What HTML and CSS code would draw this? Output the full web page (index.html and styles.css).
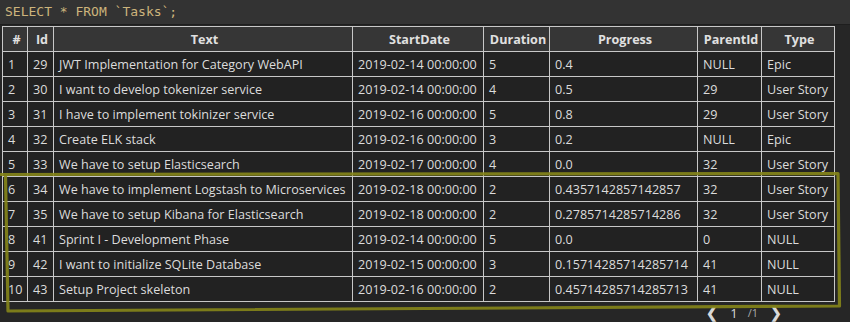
FILE: index.html
```html
<!DOCTYPE html>
<html lang="en">
<head>
    <meta charset="UTF-8">
    <title>Tasks</title>
    <link rel="stylesheet" href="styles.css">
</head>
<body>

    <div class="query-bar">SELECT * FROM `Tasks`;</div>

    <div class="result">
        <table class="grid">
            <colgroup>
                <col class="c-num">
                <col class="c-id">
                <col class="c-text">
                <col class="c-date">
                <col class="c-dur">
                <col class="c-prog">
                <col class="c-parent">
                <col class="c-type">
            </colgroup>
            <thead>
                <tr>
                    <th>#</th><th>Id</th><th>Text</th><th>StartDate</th><th>Duration</th><th>Progress</th><th>ParentId</th><th>Type</th>
                </tr>
            </thead>
            <tbody>
                <tr><td>1</td><td>29</td><td>JWT Implementation for Category WebAPI</td><td>2019-02-14 00:00:00</td><td>5</td><td>0.4</td><td>NULL</td><td>Epic</td></tr>
                <tr><td>2</td><td>30</td><td>I want to develop tokenizer service</td><td>2019-02-14 00:00:00</td><td>4</td><td>0.5</td><td>29</td><td>User Story</td></tr>
                <tr><td>3</td><td>31</td><td>I have to implement tokinizer service</td><td>2019-02-16 00:00:00</td><td>5</td><td>0.8</td><td>29</td><td>User Story</td></tr>
                <tr><td>4</td><td>32</td><td>Create ELK stack</td><td>2019-02-16 00:00:00</td><td>3</td><td>0.2</td><td>NULL</td><td>Epic</td></tr>
                <tr><td>5</td><td>33</td><td>We have to setup Elasticsearch</td><td>2019-02-17 00:00:00</td><td>4</td><td>0.0</td><td>32</td><td>User Story</td></tr>
                <tr><td>6</td><td>34</td><td>We have to implement Logstash to Microservices</td><td>2019-02-18 00:00:00</td><td>2</td><td>0.4357142857142857</td><td>32</td><td>User Story</td></tr>
                <tr><td>7</td><td>35</td><td>We have to setup Kibana for Elasticsearch</td><td>2019-02-18 00:00:00</td><td>2</td><td>0.2785714285714286</td><td>32</td><td>User Story</td></tr>
                <tr><td>8</td><td>41</td><td>Sprint I - Development Phase</td><td>2019-02-14 00:00:00</td><td>5</td><td>0.0</td><td>0</td><td>NULL</td></tr>
                <tr><td>9</td><td>42</td><td>I want to initialize SQLite Database</td><td>2019-02-15 00:00:00</td><td>3</td><td>0.15714285714285714</td><td>41</td><td>NULL</td></tr>
                <tr><td>10</td><td>43</td><td>Setup Project skeleton</td><td>2019-02-16 00:00:00</td><td>2</td><td>0.45714285714285713</td><td>41</td><td>NULL</td></tr>
            </tbody>
        </table>

        <div class="pager">
            <span class="arrow">&#10094;</span>
            <span class="page">1</span>
            <span class="total">/1</span>
            <span class="arrow">&#10095;</span>
        </div>

        <!-- hand drawn highlight round rows 6-10 -->
        <svg class="mark" width="850" height="322" viewBox="0 0 850 322">
            <path d="M0 174.5 L838 173.5 L839.5 306 L8 311 L5.5 176" fill="none" stroke="#86861a" stroke-width="3.2" stroke-opacity="0.9" stroke-linejoin="round"/>
        </svg>
    </div>

</body>
</html>
```

FILE: styles.css
```css
/* General */
body {
    margin: 0;
    background: #262626;
    color: #dcdcdc;
    font-family: 'Open Sans', 'Noto Sans', sans-serif;
    width: 850px;
    height: 322px;
    overflow: hidden;
}

/* Query line */
.query-bar {
    height: 25px;
    line-height: 23px;
    padding-left: 5px;
    background: #333333;
    border-bottom: 1px solid #1e1e1e;
    box-sizing: border-box;
    font-family: 'DejaVu Sans Mono', 'Liberation Mono', monospace;
    font-size: 13px;
    color: #cdb47c;
}

.result {
    padding: 1px 0 0 2px;
}

/* Table */
.grid {
    border-collapse: collapse;
    table-layout: fixed;
    width: 833px;
    font-size: 12.6px;
}

.c-num { width: 25px; }
.c-id { width: 26px; }
.c-text { width: 299px; }
.c-date { width: 131px; }
.c-dur { width: 66px; }
.c-prog { width: 148px; }
.c-parent { width: 64px; }
.c-type { width: 73px; }

.grid th,
.grid td {
    border: 1px solid #c8c8c8;
    height: 25px;
    padding: 0 2px 0 5px;
    box-sizing: border-box;
    white-space: nowrap;
    overflow: hidden;
}

.grid th {
    background: #363636;
    font-weight: 700;
    text-align: center;
    color: #e0e0e0;
}

.grid td {
    background: #222222;
    text-align: left;
}

/* Pager */
.pager {
    display: flex;
    justify-content: flex-end;
    align-items: center;
    gap: 12px;
    height: 16px;
    line-height: 16px;
    padding-top: 3px;
    padding-right: 68px;
    font-size: 13px;
    color: #d8d8d8;
}

.pager .arrow {
    font-size: 14px;
    line-height: 16px;
    font-weight: 700;
}

.pager .total {
    font-size: 11px;
    color: #aaaaaa;
    margin-left: -2px;
}

/* Highlight */
.mark {
    position: absolute;
    left: 0;
    top: 0;
    pointer-events: none;
}
```
